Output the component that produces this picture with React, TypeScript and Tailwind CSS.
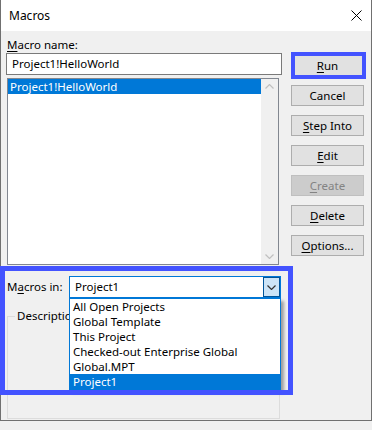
import React from "react";

const U = ({ children }: { children: React.ReactNode }) => (
  <span className="underline underline-offset-[2px] decoration-[1px]">{children}</span>
);

function Btn({ children, disabled }: { children: React.ReactNode; disabled?: boolean }) {
  return (
    <div
      className={
        "w-[73px] h-[21px] border flex items-center justify-center text-[11.5px] leading-[15px] " +
        (disabled
          ? "bg-[#cccccc] border-[#bfbfbf] text-[#838383]"
          : "bg-[#e1e1e1] border-[#adadad] text-black")
      }
    >
      <span>{children}</span>
    </div>
  );
}

const Chevron = ({ up, color }: { up?: boolean; color: string }) => (
  <svg width="9" height="5" viewBox="0 0 9 5" className="block">
    <path
      d={up ? "M0.5 4.5 L4.5 0.5 L8.5 4.5" : "M0.5 0.5 L4.5 4.5 L8.5 0.5"}
      fill="none"
      stroke={color}
      strokeWidth="1.2"
    />
  </svg>
);

export default function App() {
  const items = [
    "All Open Projects",
    "Global Template",
    "This Project",
    "Checked-out Enterprise Global",
    "Global.MPT",
    "Project1",
  ];
  return (
    <div className="relative w-[372px] h-[430px] bg-[#f0f0f0] overflow-hidden font-['Noto_Sans',sans-serif] text-black text-[11.5px]">
      <div className="w-[372px] h-[421px] border border-t-0 border-[#707070] flex flex-col">
        {/* Title bar */}
        <div className="h-[31px] bg-white flex items-center justify-between pl-[8px] pr-[9px]">
          <span className="text-[12px] leading-[16px]">Macros</span>
          <svg width="11" height="11" viewBox="0 0 11 11">
            <path d="M0.5 0.5 L10.5 10.5 M10.5 0.5 L0.5 10.5" stroke="#000" strokeWidth="1" />
          </svg>
        </div>
        {/* Body */}
        <div className="flex-1 flex pl-[5px] pt-[6px]">
          {/* Left column */}
          <div className="w-[276px] flex flex-col">
            <div className="h-[16px] leading-[16px] pl-[1px]">
              <U>M</U>acro name:
            </div>
            <div className="h-[22px] border border-[#7a7a7a] bg-white pl-[5px] flex items-center leading-[16px]">
              Project1!HelloWorld
            </div>
            <div className="mt-[3px] ml-[1px] w-[272px] h-[187px] border border-[#828790] bg-white flex">
              <div className="flex-1">
                <div className="h-[15px] bg-[#0078d7] text-white pl-[2px] leading-[15px]">
                  Project1!HelloWorld
                </div>
              </div>
              <div className="w-[17px] bg-[#f0f0f0] flex flex-col justify-between items-center py-[5px]">
                <Chevron up color="#c0c0c0" />
                <Chevron color="#c0c0c0" />
              </div>
            </div>
            <div className="mt-[11px] flex items-center h-[22px]">
              <div className="w-[63px] pl-[1px] leading-[16px]">
                M<U>a</U>cros in:
              </div>
              <div className="w-[212px] h-[22px] border border-[#0078d7] bg-white flex">
                <div className="flex-1 pl-[5px] flex items-center leading-[16px]">Project1</div>
                <div className="w-[17px] bg-[#cce4f7] border border-[#005499] flex items-center justify-center">
                  <Chevron color="#333" />
                </div>
              </div>
            </div>
            <fieldset className="mt-[10px] ml-[1px] w-[273px] h-[111px] border border-[#dcdcdc]">
              <legend className="ml-[7px] px-[2px] leading-[16px]">Description:</legend>
            </fieldset>
          </div>
          {/* Right column */}
          <div className="ml-[9px] pt-[18px] flex flex-col gap-[9px]">
            <Btn>
              <U>R</U>un
            </Btn>
            <Btn>Cancel</Btn>
            <Btn>
              <U>S</U>tep Into
            </Btn>
            <Btn>
              <U>E</U>dit
            </Btn>
            <Btn disabled>
              <U>C</U>reate
            </Btn>
            <Btn>
              <U>D</U>elete
            </Btn>
            <Btn>
              <U>O</U>ptions...
            </Btn>
          </div>
        </div>
      </div>

      {/* Open dropdown popup */}
      <div className="absolute left-[69px] top-[298px] w-[212px] h-[92px] border border-[#0078d7] bg-white shadow-[3px_3px_3px_rgba(0,0,0,0.35)]">
        {items.map((it, i) => (
          <div
            key={it}
            className={
              "h-[15px] leading-[15px] pl-[3px] overflow-hidden " +
              (i === items.length - 1 ? "bg-[#0078d7] text-white" : "")
            }
          >
            {it}
          </div>
        ))}
      </div>

      {/* Annotation frames */}
      <div className="absolute left-[291px] top-[52px] w-[75px] h-[27px] border-4 border-[#4353ff]" />
      <div className="absolute left-0 top-[266px] w-[293px] h-[129px] border-[5px] border-[#4353ff]" />
    </div>
  );
}
